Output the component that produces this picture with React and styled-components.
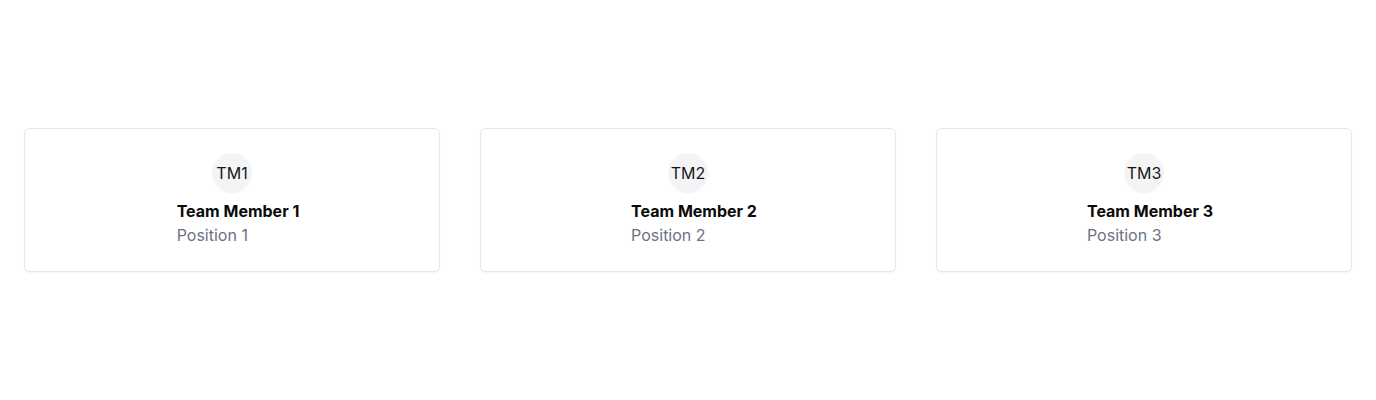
import React from "react";
import styled, { createGlobalStyle } from "styled-components";

const GlobalStyle = createGlobalStyle`
  html, body {
    margin: 0;
    padding: 0;
    background: #ffffff;
    font-family: Inter, "Liberation Sans", sans-serif;
  }
`;

const Page = styled.div`
  height: 400px;
  display: flex;
  align-items: center;
  padding: 0 24px;
  box-sizing: border-box;
`;

const Grid = styled.div`
  width: 100%;
  display: grid;
  grid-template-columns: repeat(3, 1fr);
  gap: 40px;
`;

const Card = styled.div`
  border: 1px solid #e5e7eb;
  border-radius: 6px;
  box-shadow: 0 1px 2px rgba(0, 0, 0, 0.05);
  background: #fff;
  padding: 24px;
  display: flex;
  flex-direction: column;
  align-items: center;
  gap: 6px;
`;

const Avatar = styled.div`
  width: 40px;
  height: 40px;
  border-radius: 50%;
  background: #f3f4f6;
  display: flex;
  align-items: center;
  justify-content: center;
  font-size: 16px;
  color: #171717;
`;

const Info = styled.div`
  display: flex;
  flex-direction: column;
  margin-left: 12px;
`;

const Name = styled.div`
  font-size: 16px;
  line-height: 24px;
  font-weight: 700;
  color: #0a0a0a;
`;

const Role = styled.div`
  font-size: 16px;
  line-height: 24px;
  color: #6b7280;
`;

const members = [1, 2, 3].map((n) => ({
  initials: "TM" + n,
  name: "Team Member " + n,
  position: "Position " + n,
}));

const App = () => (
  <>
    <GlobalStyle />
    <Page>
      <Grid>
        {members.map((m) => (
          <Card key={m.initials}>
            <Avatar>{m.initials}</Avatar>
            <Info>
              <Name>{m.name}</Name>
              <Role>{m.position}</Role>
            </Info>
          </Card>
        ))}
      </Grid>
    </Page>
  </>
);

export default App;
